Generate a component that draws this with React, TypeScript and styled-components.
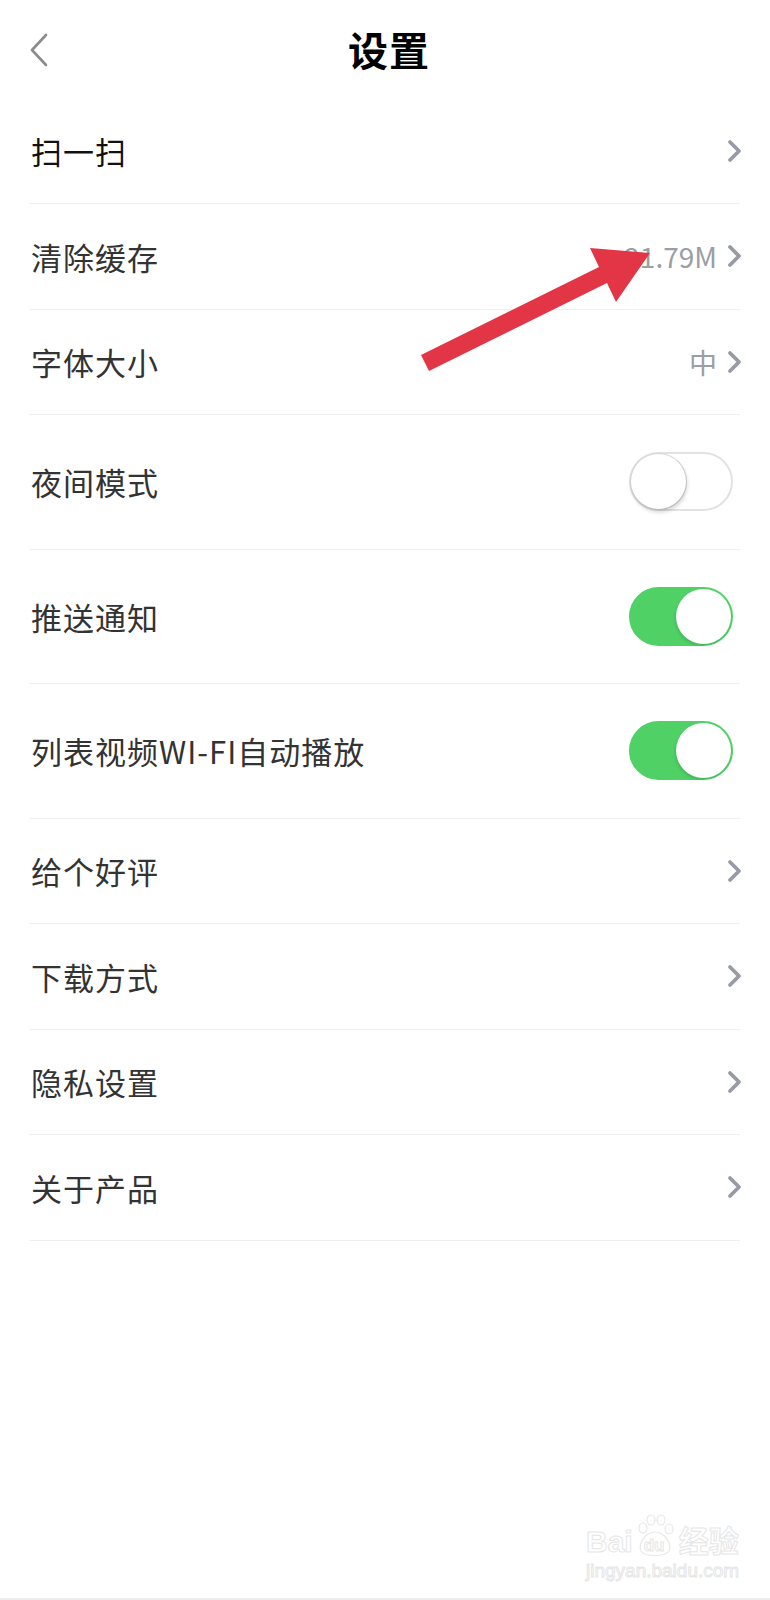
import styled, { createGlobalStyle } from 'styled-components';

const GlobalStyle = createGlobalStyle`
  html, body {
    margin: 0;
    padding: 0;
    background: #fff;
  }
  body {
    font-family: "Noto Sans CJK SC", "Noto Sans", sans-serif;
  }
`;

type Item =
  | { label: string; kind: 'link'; value?: string }
  | { label: string; kind: 'toggle'; on: boolean };

const items: Item[] = [
  { label: '扫一扫', kind: 'link' },
  { label: '清除缓存', kind: 'link', value: '21.79M' },
  { label: '字体大小', kind: 'link', value: '中' },
  { label: '夜间模式', kind: 'toggle', on: false },
  { label: '推送通知', kind: 'toggle', on: true },
  { label: '列表视频WI-FI自动播放', kind: 'toggle', on: true },
  { label: '给个好评', kind: 'link' },
  { label: '下载方式', kind: 'link' },
  { label: '隐私设置', kind: 'link' },
  { label: '关于产品', kind: 'link' },
];

const Chevron = () => (
  <svg width="16" height="24" viewBox="0 0 16 24">
    <path d="M3 3 L12 12 L3 21" fill="none" stroke="#979ba3" strokeWidth="3.8" strokeLinecap="round" strokeLinejoin="round" />
  </svg>
);

const BackIcon = () => (
  <svg width="22" height="34" viewBox="0 0 22 34">
    <path d="M18 2 L4 17 L18 32" fill="none" stroke="#8c8c8c" strokeWidth="2.6" strokeLinecap="round" strokeLinejoin="round" />
  </svg>
);

const SettingsPage = () => {
  return (
    <Page>
      <GlobalStyle />
      <Header>
        <BackButton>
          <BackIcon />
        </BackButton>
        <Title>设置</Title>
        <span />
      </Header>

      <List>
        {items.map((item, i) => (
          <Row key={item.label} $tall={item.kind === 'toggle'}>
            <Label $strong={i === 0}>{item.label}</Label>
            {item.kind === 'link' ? (
              <Trail>
                {item.value && <Value>{item.value}</Value>}
                <Chevron />
              </Trail>
            ) : (
              <Switch $on={item.on}>
                <Knob $on={item.on} />
              </Switch>
            )}
          </Row>
        ))}
      </List>

      {/* 标注箭头 */}
      <Arrow width="770" height="400" viewBox="0 0 770 400">
        <polygon
          points="421,355 599,267 590,248 650,253 616,302 607,283 429,371"
          fill="#e23646"
        />
      </Arrow>

      <Watermark>
        <MarkTop>
          <span>Bai</span>
          <Paw>
            <svg width="40" height="44" viewBox="0 0 40 44">
              <g fill="none" stroke="#e8e8e8" strokeWidth="1.2">
                <ellipse cx="8" cy="14" rx="4" ry="5" />
                <ellipse cx="16" cy="6" rx="4" ry="5" />
                <ellipse cx="26" cy="6" rx="4" ry="5" />
                <ellipse cx="34" cy="15" rx="4" ry="5" />
                <path d="M20 18 C10 18 3 30 6 37 C9 43 31 43 34 37 C37 30 30 18 20 18 Z" />
              </g>
            </svg>
            <PawText>du</PawText>
          </Paw>
          <span>经验</span>
        </MarkTop>
        <MarkSub>jingyan.baidu.com</MarkSub>
      </Watermark>
    </Page>
  );
};

export default SettingsPage;

const Page = styled.div`
  position: relative;
  width: 770px;
  height: 1600px;
  box-sizing: border-box;
  background: #fff;
  border-bottom: 2px solid #ececec;
  overflow: hidden;
`;

const Header = styled.header`
  height: 98.5px;
  display: grid;
  grid-template-columns: 1fr auto 1fr;
  align-items: center;
  padding: 0 20px 0 28px;
`;

const BackButton = styled.div`
  display: flex;
  align-items: center;
  padding-top: 2px;
`;

const Title = styled.h1`
  margin: 0;
  font-size: 40px;
  font-weight: 700;
  color: #000;
  letter-spacing: 1px;
  line-height: 1;
`;

const List = styled.div`
  margin: 0 30px 0 29px;
`;

const Row = styled.div<{ $tall: boolean }>`
  height: ${(p) => (p.$tall ? 134.5 : 105.5)}px;
  box-sizing: border-box;
  display: flex;
  align-items: center;
  justify-content: space-between;
  border-bottom: 1px solid #efefef;
`;

const Label = styled.span<{ $strong: boolean }>`
  font-size: 31px;
  letter-spacing: 1px;
  color: ${(p) => (p.$strong ? '#111' : '#333')};
  padding-left: 2px;
`;

const Trail = styled.div`
  display: flex;
  align-items: center;
  gap: 10px;
  margin-right: -3px;
`;

const Value = styled.span`
  font-size: 28px;
  color: #9b9ea3;
`;

const Switch = styled.div<{ $on: boolean }>`
  position: relative;
  width: 104px;
  height: 59px;
  box-sizing: border-box;
  margin-right: 7px;
  border-radius: 30px;
  background: ${(p) => (p.$on ? '#4fd166' : '#fff')};
  border: 2px solid ${(p) => (p.$on ? '#4fd166' : '#e2e2e2')};
`;

const Knob = styled.div<{ $on: boolean }>`
  position: absolute;
  top: 0;
  left: ${(p) => (p.$on ? 45 : 0)}px;
  width: 55px;
  height: 55px;
  border-radius: 50%;
  background: #fff;
  box-shadow: ${(p) =>
    p.$on ? '-1px 2px 3px rgba(0,0,0,0.12)' : '1px 3px 4px rgba(0,0,0,0.18), 0 0 0 1px #d8d8d8'};
`;

const Arrow = styled.svg`
  position: absolute;
  left: 0;
  top: 0;
  pointer-events: none;
`;

const Watermark = styled.div`
  position: absolute;
  left: 586px;
  top: 1514px;
  display: flex;
  flex-direction: column;
  align-items: flex-start;
  font-family: "Liberation Sans", "Noto Sans CJK SC", sans-serif;
  color: transparent;
  -webkit-text-stroke: 1px #e6e6e6;
`;

const MarkTop = styled.div`
  display: flex;
  align-items: flex-end;
  font-size: 30px;
  font-weight: 700;
  line-height: 32px;
`;

const Paw = styled.div`
  position: relative;
  width: 40px;
  height: 44px;
  margin: 0 4px 0 2px;
`;

const PawText = styled.span`
  position: absolute;
  left: 9px;
  bottom: 2px;
  font-size: 17px;
  line-height: 20px;
`;

const MarkSub = styled.div`
  font-size: 19px;
  line-height: 24px;
  margin-top: 1px;
`;
